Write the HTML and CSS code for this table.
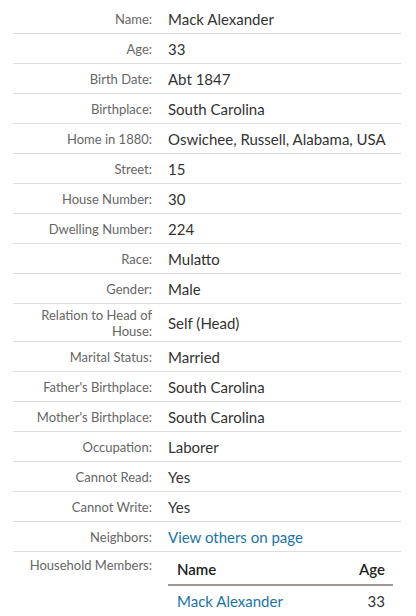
FILE: index.html
```html
<!DOCTYPE html>
<html>
<head>
<meta charset="utf-8">
<link rel="stylesheet" href="styles.css">
</head>
<body>
<div class="record">
  <div class="row"><div class="label">Name:</div><div class="value">Mack Alexander</div></div>
  <div class="row"><div class="label">Age:</div><div class="value">33</div></div>
  <div class="row"><div class="label">Birth Date:</div><div class="value">Abt 1847</div></div>
  <div class="row"><div class="label">Birthplace:</div><div class="value">South Carolina</div></div>
  <div class="row"><div class="label">Home in 1880:</div><div class="value">Oswichee, Russell, Alabama, USA</div></div>
  <div class="row"><div class="label">Street:</div><div class="value">15</div></div>
  <div class="row"><div class="label">House Number:</div><div class="value">30</div></div>
  <div class="row"><div class="label">Dwelling Number:</div><div class="value">224</div></div>
  <div class="row"><div class="label">Race:</div><div class="value">Mulatto</div></div>
  <div class="row"><div class="label">Gender:</div><div class="value">Male</div></div>
  <div class="row tall"><div class="label">Relation to Head of House:</div><div class="value">Self (Head)</div></div>
  <div class="row"><div class="label">Marital Status:</div><div class="value">Married</div></div>
  <div class="row"><div class="label">Father's Birthplace:</div><div class="value">South Carolina</div></div>
  <div class="row"><div class="label">Mother's Birthplace:</div><div class="value">South Carolina</div></div>
  <div class="row"><div class="label">Occupation:</div><div class="value">Laborer</div></div>
  <div class="row"><div class="label">Cannot Read:</div><div class="value">Yes</div></div>
  <div class="row"><div class="label">Cannot Write:</div><div class="value">Yes</div></div>
  <div class="row"><div class="label">Neighbors:</div><div class="value"><a class="link" href="#">View others on page</a></div></div>
  <div class="row members"><div class="label">Household Members:</div>
    <div class="value">
      <table class="household">
        <thead><tr><th class="col-name">Name</th><th class="col-age">Age</th></tr></thead>
        <tbody><tr><td class="col-name"><a class="link" href="#">Mack Alexander</a></td><td class="col-age">33</td></tr></tbody>
      </table>
    </div>
  </div>
</div>
</body>
</html>
```
FILE: styles.css
```css
html, body {
  margin: 0;
  padding: 0;
  background: #ffffff;
}
body {
  font-family: "Lato", "Liberation Sans", sans-serif;
  color: #333333;
}
.record {
  margin: 4px 15px 0 13px;
}
.row {
  display: grid;
  grid-template-columns: 139px 1fr;
  column-gap: 16px;
  align-items: center;
  min-height: 29px;
  border-bottom: 1px solid #dddddd;
}
.row.tall {
  min-height: 37px;
}
.label {
  text-align: right;
  font-size: 13px;
  line-height: 16px;
  color: #666666;
}
.value {
  font-size: 15px;
  line-height: 20px;
  color: #333333;
}
.link {
  color: #1b73a6;
  text-decoration: none;
}
.row.members {
  align-items: start;
  border-bottom: none;
  padding-top: 5px;
}
.household {
  width: 225px;
  border-collapse: collapse;
  margin-top: 0;
}
.household th {
  font-weight: 600;
  color: #222222;
  font-size: 15px;
  line-height: 20px;
  padding: 2px 8px 5px 9px;
  border-bottom: 2px solid #9e9994;
}
.household td {
  font-size: 15px;
  line-height: 20px;
  padding: 5px 8px 5px 9px;
}
.col-name { text-align: left; }
.col-age { text-align: right; }
```
